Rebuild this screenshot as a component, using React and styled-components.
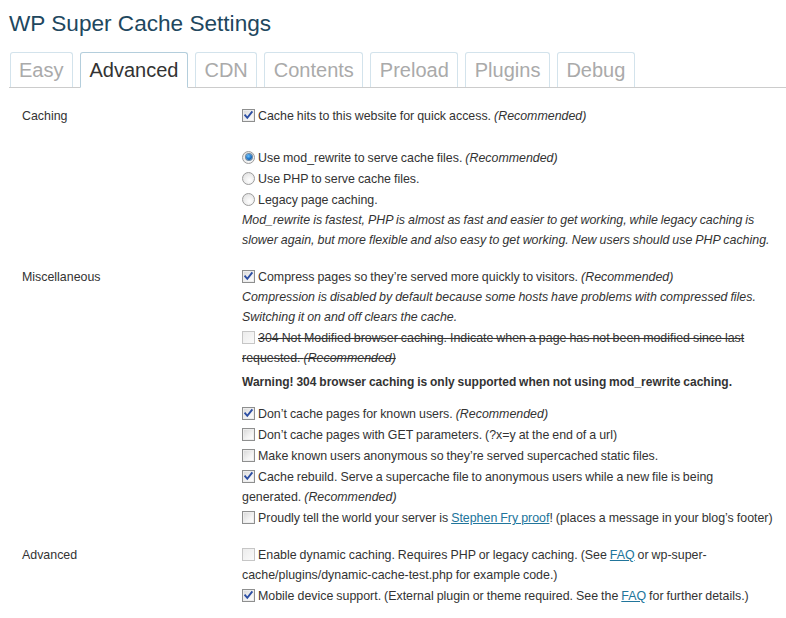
import React from 'react';
import styled, { createGlobalStyle } from 'styled-components';

const GlobalStyle = createGlobalStyle`
  html, body { margin: 0; padding: 0; background: #fff; }
  body {
    font-family: "Liberation Sans", Arial, sans-serif;
    font-size: 12.4px;
    word-spacing: -0.45px;
    color: #333;
  }
`;

const Wrap = styled.div`
  padding: 9px 0 0 9px;
`;

const Title = styled.h2`
  margin: 0;
  font-size: 22.6px;
  line-height: 29px;
  font-weight: normal;
  word-spacing: 0;
  color: #21475e;
`;

const TabBar = styled.nav`
  display: flex;
  align-items: flex-end;
  gap: 7px;
  margin-top: 14px;
  padding-left: 0.5px;
  border-bottom: 1px solid #cccccc;
`;

const Tab = styled.a`
  display: block;
  padding: 5px 8.5px;
  font-size: 20px;
  line-height: 24px;
  word-spacing: 0;
  background: #fff;
  text-decoration: none;
  border: 1px solid ${p => (p.$active ? '#b4cedc' : '#d3e3ec')};
  border-bottom: ${p => (p.$active ? '1px solid #fff' : 'none')};
  margin-bottom: ${p => (p.$active ? '-1px' : '0')};
  border-radius: 3px 3px 0 0;
  color: ${p => (p.$active ? '#333' : '#aaaaaa')};
`;

const Settings = styled.div`
  margin: 9.5px 1px 0 3px;
`;

const Row = styled.div`
  display: grid;
  grid-template-columns: 220px 1fr;
`;

const Label = styled.div`
  padding: 8.5px 10px 8px;
  line-height: 20px;
`;

const Cell = styled.div`
  padding: 8px 10px;
  line-height: 20px;
`;

const Option = styled.div`
  padding: 0.5px 0;
  text-decoration: ${p => (p.$struck ? 'line-through' : 'none')};
`;

const Desc = styled.div`
  font-style: italic;
`;

const Blank = styled.div`
  height: 20.5px;
`;

const Warning = styled.div`
  font-weight: bold;
  font-size: 12px;
  margin: 4px 0 11.5px;
`;

const Link = styled.a`
  color: #21759b;
  text-decoration: underline;
`;

const Box = styled.span`
  display: inline-block;
  position: relative;
  box-sizing: border-box;
  width: 13px;
  height: 13px;
  margin-right: 3px;
  vertical-align: -2px;
  border: 1px solid ${p => (p.$disabled ? '#c6c6c6' : '#8e8f8f')};
  background: ${p =>
    p.$disabled
      ? 'linear-gradient(135deg, #ececec, #fafafa)'
      : 'linear-gradient(135deg, #d6d6d6, #f4f4f4 60%, #ffffff)'};
  box-shadow: ${p => (p.$disabled ? 'none' : 'inset 0 0 0 1px #ededed')};
  svg { position: absolute; left: 0; top: 0; }
`;

const Radio = styled.span`
  display: inline-block;
  position: relative;
  box-sizing: border-box;
  width: 13px;
  height: 13px;
  margin-right: 3px;
  vertical-align: -2px;
  border-radius: 50%;
  border: 1px solid #9c9c9c;
  background: radial-gradient(circle at 60% 65%, #ffffff, #dcdcdc);
  &::after {
    content: '';
    display: ${p => (p.$on ? 'block' : 'none')};
    position: absolute;
    left: 2.5px;
    top: 2.5px;
    width: 6px;
    height: 6px;
    border-radius: 50%;
    background: radial-gradient(circle at 40% 35%, #6cc4ff, #1a6fc4 55%, #0b3e7a);
    box-shadow: 0 0 0 1px #6f8aa0;
  }
`;

const Check = ({ on, disabled }) => (
  <Box $disabled={disabled}>
    {on && (
      <svg width="11" height="11" viewBox="0 0 11 11">
        <path d="M2.2 5.4 L4.3 7.8 L8.8 2.2" fill="none" stroke="#2c4ea3" strokeWidth="1.9" strokeLinecap="square" />
      </svg>
    )}
  </Box>
);

const tabs = ['Easy', 'Advanced', 'CDN', 'Contents', 'Preload', 'Plugins', 'Debug'];

export default function App() {
  return (
    <>
      <GlobalStyle />
      <Wrap>
        <Title>WP Super Cache Settings</Title>
        <TabBar>
          {tabs.map(t => (
            <Tab key={t} $active={t === 'Advanced'}>{t}</Tab>
          ))}
        </TabBar>
        <Settings>
          <Row>
            <Label>Caching</Label>
            <Cell>
              <Option><Check on />Cache hits to this website for quick access. <i>(Recommended)</i></Option>
              <Blank />
              <Option><Radio $on />Use mod_rewrite to serve cache files. <i>(Recommended)</i></Option>
              <Option><Radio />Use PHP to serve cache files.</Option>
              <Option><Radio />Legacy page caching.</Option>
              <Desc>Mod_rewrite is fastest, PHP is almost as fast and easier to get working, while legacy caching is slower again, but more flexible and also easy to get working. New users should use PHP caching.</Desc>
            </Cell>
          </Row>
          <Row>
            <Label>Miscellaneous</Label>
            <Cell>
              <Option><Check on />Compress pages so they’re served more quickly to visitors. <i>(Recommended)</i></Option>
              <Desc>Compression is disabled by default because some hosts have problems with compressed files. Switching it on and off clears the cache.</Desc>
              <Option $struck><Check disabled />304 Not Modified browser caching. Indicate when a page has not been modified since last requested. <i>(Recommended)</i></Option>
              <Warning>Warning! 304 browser caching is only supported when not using mod_rewrite caching.</Warning>
              <Option><Check on />Don’t cache pages for known users. <i>(Recommended)</i></Option>
              <Option><Check />Don’t cache pages with GET parameters. (?x=y at the end of a url)</Option>
              <Option><Check />Make known users anonymous so they’re served supercached static files.</Option>
              <Option><Check on />Cache rebuild. Serve a supercache file to anonymous users while a new file is being generated. <i>(Recommended)</i></Option>
              <Option><Check />Proudly tell the world your server is <Link href="#">Stephen Fry proof</Link>! (places a message in your blog’s footer)</Option>
            </Cell>
          </Row>
          <Row>
            <Label>Advanced</Label>
            <Cell>
              <Option><Check disabled />Enable dynamic caching. Requires PHP or legacy caching. (See <Link href="#">FAQ</Link> or wp-super-cache/plugins/dynamic-cache-test.php for example code.)</Option>
              <Option><Check on />Mobile device support. (External plugin or theme required. See the <Link href="#">FAQ</Link> for further details.)</Option>
            </Cell>
          </Row>
        </Settings>
      </Wrap>
    </>
  );
}
